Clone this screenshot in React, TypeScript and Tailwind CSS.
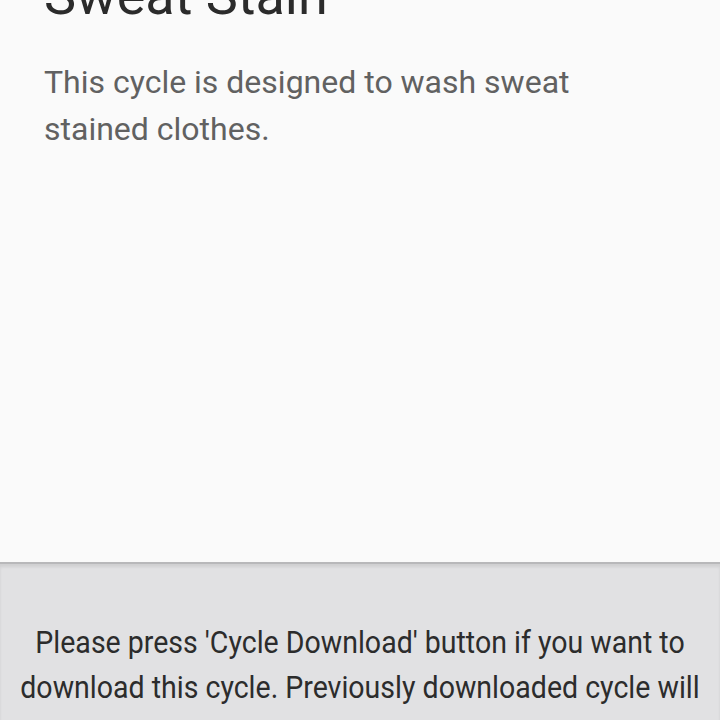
export default function App() {
  return (
    <div className="w-[720px] h-[720px] overflow-hidden flex flex-col bg-[#fafafa] font-['Roboto',sans-serif]">
      <div className="h-[562px] shrink-0 px-[44px]">
        <h1 className="mt-[-36px] text-[54px] leading-[64px] text-[#2b2b2b]">Sweat Stain</h1>
        <p className="mt-[31px] w-[590px] text-[32px] leading-[47px] text-[#616161]">
          This cycle is designed to wash sweat stained clothes.
        </p>
      </div>
      <div className="flex-1 bg-[#e1e1e3] border-t-2 border-[#b8b8ba] shadow-[inset_0_3px_3px_rgba(0,0,0,0.08)] pt-[56px] overflow-hidden">
        <p className="w-[770px] ml-[-25px] scale-x-[0.92] text-center text-[31px] leading-[45px] text-[#2c2c2c]">
          Please press 'Cycle Download' button if you want to download this cycle. Previously downloaded cycle will be replaced.
        </p>
      </div>
    </div>
  );
}
